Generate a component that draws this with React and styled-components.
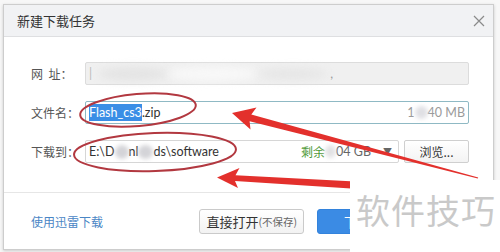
import React from "react";
import styled, { createGlobalStyle } from "styled-components";

const Global = createGlobalStyle`
  html, body { margin: 0; padding: 0; background: #fff; }
  body { font-family: "Noto Sans CJK SC", "Noto Sans", sans-serif; }
`;

const Page = styled.div`
  position: relative;
  width: 500px;
  height: 252px;
  overflow: hidden;
  background: #f7f7f7;
  padding: 4px 0 0 3px;
  box-sizing: border-box;
`;

const Dialog = styled.div`
  width: 491px;
  height: 246px;
  box-sizing: border-box;
  border: 1px solid #cdcdcd;
  background: #fff;
  box-shadow: 0 1px 3px rgba(0, 0, 0, 0.18);
  display: flex;
  flex-direction: column;
`;

const TitleBar = styled.div`
  height: 32px;
  box-sizing: border-box;
  background: #f1f2f4;
  border-bottom: 1px solid #dedfe1;
  display: flex;
  align-items: center;
  justify-content: space-between;
  padding: 0 8px 0 13px;
  font-size: 13px;
  color: #333;
`;

const Close = styled.svg`
  width: 12px;
  height: 12px;
`;

const Form = styled.div`
  display: flex;
  flex-direction: column;
  gap: 16px;
  padding: 25px 24px 29px 27px;
  border-bottom: 1px solid #e6e6e6;
`;

const Row = styled.div`
  display: flex;
  align-items: center;
  height: 23px;
`;

const Label = styled.div`
  width: 54px;
  font-size: 12px;
  color: #555;
  white-space: pre;
`;

const Field = styled.div`
  flex: 1;
  height: 23px;
  box-sizing: border-box;
  border: 1px solid ${(p) => p.$border || "#d6d6d6"};
  background: ${(p) => p.$bg || "#fff"};
  border-radius: 2px;
  display: flex;
  align-items: center;
  padding: 0 3px 0 3px;
  font-family: Lato, "Noto Sans", "Noto Sans CJK SC", sans-serif;
  font-size: 12.5px;
  color: #333;
  white-space: pre;
`;

const Sel = styled.span`
  background: #3a8ee6;
  color: #fff;
  padding: 1px 0;
`;

const Blur = styled.span`
  display: inline-block;
  width: ${(p) => p.$w}px;
  height: ${(p) => p.$h || 12}px;
  background: ${(p) => p.$c || "#d9d9dc"};
  border-radius: 50%;
  filter: blur(${(p) => p.$r || 2}px);
`;

const Faint = styled.span`
  color: ${(p) => p.$c || "#aaa"};
`;

const Right = styled.span`
  margin-left: auto;
  display: flex;
  align-items: center;
  color: ${(p) => p.$c || "#9a9a9a"};
`;

const Green = styled.span`
  color: #4f9a3a;
  font-family: "Noto Sans CJK SC", sans-serif;
  font-size: 12px;
`;

const Caret = styled.span`
  font-size: 9px;
  color: #666;
  margin: 0 3px 0 12px;
`;

const BrowseButton = styled.div`
  width: 65px;
  height: 23px;
  margin-left: 5px;
  box-sizing: border-box;
  border: 1px solid #cfcfcf;
  border-radius: 2px;
  background: linear-gradient(#ffffff, #f3f3f3);
  display: flex;
  align-items: center;
  justify-content: center;
  font-size: 12px;
  color: #333;
`;

const Footer = styled.div`
  flex: 1;
  display: flex;
  align-items: center;
  padding: 0 0 0 27px;
`;

const Link = styled.div`
  font-size: 12px;
  color: #4a86c5;
`;

const Buttons = styled.div`
  margin-left: auto;
  margin-right: 96px;
  display: flex;
  gap: 13px;
  margin-top: 1px;
`;

const Button = styled.div`
  height: 25px;
  box-sizing: border-box;
  padding: 0 ${(p) => (p.$primary ? 0 : 6)}px;
  width: ${(p) => (p.$primary ? "80px" : "auto")};
  border-radius: 3px;
  border: 1px solid ${(p) => (p.$primary ? "#3383dc" : "#cacaca")};
  background: ${(p) => (p.$primary ? "#3b8be4" : "linear-gradient(#ffffff, #f2f2f2)")};
  color: ${(p) => (p.$primary ? "#fff" : "#333")};
  display: flex;
  align-items: center;
  justify-content: center;
  font-size: 13px;
`;

const Small = styled.span`
  font-size: 10.5px;
  color: #666;
`;

const Overlay = styled.svg`
  position: absolute;
  left: 0;
  top: 0;
  width: 500px;
  height: 252px;
  pointer-events: none;
`;

const Watermark = styled.div`
  position: absolute;
  left: 350px;
  top: 180px;
  right: 0;
  bottom: 0;
  background: #fff;
  padding: 13px 0 0 6px;
  font-size: 34px;
  line-height: 1;
  color: #c9c9c9;
  letter-spacing: 1px;
  white-space: nowrap;
`;

export default function App() {
  return (
    <>
      <Global />
      <Page>
        <Dialog>
          <TitleBar>
            <span>新建下载任务</span>
            <Close viewBox="0 0 12 12">
              <path d="M1 1 L11 11 M11 1 L1 11" stroke="#8a8a8a" strokeWidth="1.2" />
            </Close>
          </TitleBar>
          <Form>
            <Row>
              <Label>{"网  址："}</Label>
              <Field $bg="#f0f0f0" $border="#dcdcdc">
                <Faint $c="#bbb">|</Faint>
                <Blur $w={70} $h={14} $c="#e4e4e4" $r={4} style={{ marginLeft: 6 }} />
                <Blur $w={90} $h={14} $c="#f8f8f8" $r={4} />
                <Blur $w={70} $h={12} $c="#e6e6e6" $r={4} />
                <Faint $c="#999" style={{ marginLeft: 2 }}>,</Faint>
              </Field>
            </Row>
            <Row>
              <Label>文件名：</Label>
              <Field $border="#8fb9c4">
                <Sel>Flash_cs3</Sel>.zip
                <Right>
                  1
                  <Blur $w={13} $h={13} $c="#e0e0e4" />
                  40 MB
                </Right>
              </Field>
            </Row>
            <Row>
              <Label>下载到：</Label>
              <Field>
                E:\D
                <Blur $w={14} $h={14} $c="#d4d4d8" />
                nl
                <Blur $w={15} $h={14} $c="#d4d4d8" />
                ds\software
                <Right $c="#666">
                  <Green>剩余</Green>
                  <Blur $w={11} $h={13} $c="#e2e2e4" />
                  04 GB
                  <Caret>▼</Caret>
                </Right>
              </Field>
              <BrowseButton>浏览...</BrowseButton>
            </Row>
          </Form>
          <Footer>
            <Link>使用迅雷下载</Link>
            <Buttons>
              <Button>
                直接打开<Small>(不保存)</Small>
              </Button>
              <Button $primary>下载</Button>
            </Buttons>
          </Footer>
        </Dialog>
        <Overlay viewBox="0 0 500 252">
          <ellipse cx="138" cy="110" rx="58" ry="16" fill="none" stroke="#b23840" strokeWidth="2" transform="rotate(-5 138 110)" />
          <ellipse cx="155" cy="152" rx="81" ry="19" fill="none" stroke="#b23840" strokeWidth="2" transform="rotate(-2 155 152)" />
          <polygon
            fill="#e3302c"
            points="232,113 256.5,107.5 251.3,114.6 478.2,177.4 477.8,178.6 249.6,121.3 250.5,129.5"
          />
          <polygon
            fill="#e3302c"
            points="217,177.5 239.5,168 235.5,175.3 355.2,181.4 354.8,188.8 235,181 238,188"
          />
        </Overlay>
        <Watermark>软件技巧</Watermark>
      </Page>
    </>
  );
}
